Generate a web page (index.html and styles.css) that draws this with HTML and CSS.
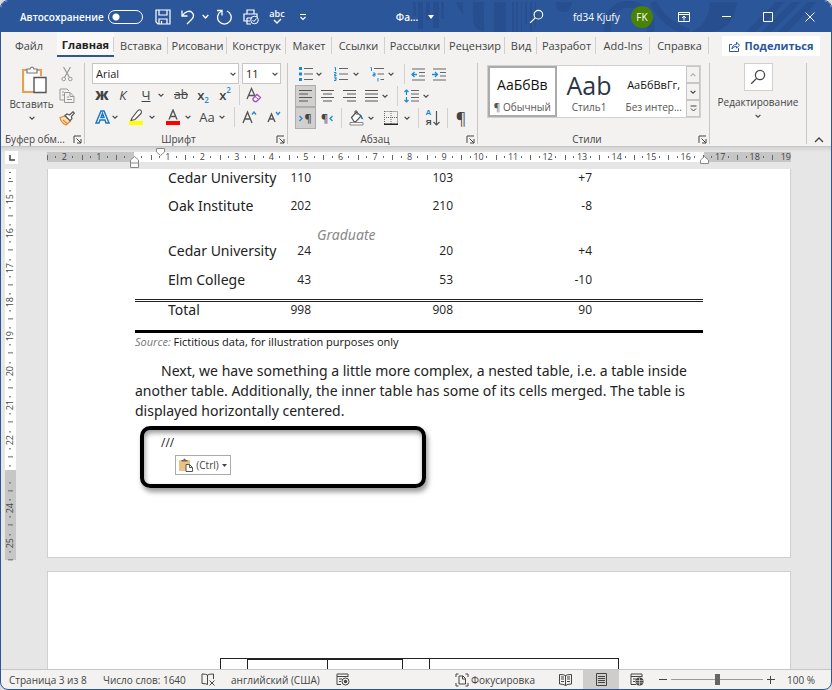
FILE: index.html
```html
<!DOCTYPE html>
<html lang="ru">
<head>
<meta charset="utf-8">
<title>Word</title>
<link rel="stylesheet" href="styles.css">
</head>
<body>
<svg class="sprite" aria-hidden="true">
  <symbol id="chev" viewBox="0 0 6 6"><path d="M.6 1.8 3 4.2 5.4 1.8" fill="none" stroke="currentColor" stroke-width="1.2"/></symbol>
  <symbol id="launch" viewBox="0 0 9 9"><path d="M1 8V1h7M3.5 3.5 8 8M8 4v4H4" fill="none" stroke="currentColor"/></symbol>
  <symbol id="lens" viewBox="0 0 16 16"><circle cx="10" cy="6" r="4.6" fill="none" stroke="currentColor" stroke-width="1.2"/><path d="M6.6 9.4 1.2 14.8" stroke="currentColor" stroke-width="1.3"/></symbol>
</svg>
<div class="window">
  <header class="titlebar">
    <svg class="pattern" viewBox="0 0 422 31" preserveAspectRatio="xMaxYMin slice" aria-hidden="true">
      <g fill="#274e8f"><path d="M4 1h3v14H4zM9 1h5v27H9zM17 1h4v18h-4zM24 1h6v26h-6zM32 1h3v17h-3zM47 1h7v12q-5-4-7-12zM64 1h11v30q-11-3-11-12zM85 1h12v30H85zM103 1h2v30h-2zM107 1h2v30h-2zM112 1h1v30h-1zM116 1h2v22h-2zM121 1h2v30h-2zM126 1h1v25h-1z"/><path d="M147 1h16q-1 10-9 10t-7-10zM301 1h27q-3 26-25 30h-21q18-8 19-30zM337 31 367 1h9l-30 30zM353 31 383 1h9l-30 30zM369 31 399 1h9l-30 30z"/></g>
      <g fill="none" stroke="#274e8f" stroke-width="7"><circle cx="220" cy="25" r="22"/><path d="M244 1q10 22 36 30"/></g>
    </svg>
    <label class="autosave">Автосохранение <input type="checkbox" role="switch"></label>
    <div class="quick">
      <button aria-label="Сохранить"><svg width="16" height="16" viewBox="0 0 16 16"><path d="M1 1h14v14H3l-2-2zM4 1v5h8V1M4 15v-5h8v5M6.500 12v3" fill="none" stroke="currentColor" stroke-width="1.200"/></svg></button>
      <button aria-label="Отменить"><svg width="16" height="16" viewBox="0 0 16 16"><path d="M2 1.500v5.500h5.500M2 7C5 2.500 9.500 1 12 3.500s1.500 5-.5 7L7 15" fill="none" stroke="currentColor" stroke-width="1.300"/></svg></button>
      <button aria-label="Варианты отмены"><svg width="7" height="7"><use href="#chev"/></svg></button>
      <button aria-label="Повторить"><svg width="16" height="16" viewBox="0 0 16 16"><path d="M1 1.500h5v5M5.800 2A6.800 6.800 0 1 0 11 2" fill="none" stroke="currentColor" stroke-width="1.300"/></svg></button>
      <button aria-label="Печать"><svg width="16" height="16" viewBox="0 0 16 16"><path d="M4 5V1h7v4M7 12H1V5h13v3M4 9h5M4 9v6h4" fill="none" stroke="currentColor" stroke-width="1.200"/><circle cx="11.500" cy="11" r="3.800" fill="none" stroke="currentColor"/><path d="m9.500 11 1.500 1.500 2.500-3" fill="none" stroke="currentColor"/></svg></button>
      <button class="spell" aria-label="Правописание">abc<svg width="9" height="6" viewBox="0 0 9 6"><path d="m1 2 3 3 4-4" fill="none" stroke="currentColor" stroke-width="1.300"/></svg></button>
      <button aria-label="Настройка панели"><svg width="8" height="8" viewBox="0 0 8 8"><path d="M1 1.500h6M1.500 4 4 6.500 6.500 4" fill="none" stroke="currentColor" stroke-width="1.200"/></svg></button>
    </div>
    <button class="doc-name">Фа... <svg width="6" height="4" viewBox="0 0 6 4"><path d="M0 0h6L3 4z" fill="currentColor"/></svg></button>
    <button class="search" aria-label="Поиск"><svg width="15" height="15"><use href="#lens"/></svg></button>
    <span class="user">fd34 Kjufy</span>
    <span class="avatar">FK</span>
    <div class="winbtns">
      <button aria-label="Параметры отображения ленты"><svg width="12" height="10" viewBox="0 0 12 10"><path d="M.5.500h11v9H.500zM.500 2.500h11M6 8.500v-4M4 6l2-2 2 2" fill="none" stroke="currentColor"/></svg></button>
      <button aria-label="Свернуть"><svg width="9" height="10" viewBox="0 0 9 10"><path d="M0 4.500h9" stroke="currentColor"/></svg></button>
      <button aria-label="Развернуть"><svg width="10" height="10" viewBox="0 0 10 10"><path d="M.5.500h9v9h-9z" fill="none" stroke="currentColor"/></svg></button>
      <button aria-label="Закрыть"><svg width="10" height="10" viewBox="0 0 10 10"><path d="m.5.500 9 9m0-9-9 9" stroke="currentColor"/></svg></button>
    </div>
  </header>

  <div class="tabbar">
    <nav class="tabs">
      <button class="plain">Файл</button><button class="active">Главная</button><button>Вставка</button><button>Рисовани</button><button>Конструк</button><button>Макет</button><button>Ссылки</button><button>Рассылки</button><button>Рецензир</button><button>Вид</button><button>Разработ</button><button>Add-Ins</button><button>Справка</button>
    </nav>
    <button class="share"><svg width="11" height="11" viewBox="0 0 11 11"><path d="M3 3.500H.500v7h9V7M3 8c0-3 2-4.500 4.500-4.500V1.200l3 3-3 3V5.500C5.500 5.500 4 6 3 8z" fill="none" stroke="currentColor"/></svg>Поделиться</button>
  </div>

  <div class="ribbon">
    <section class="group clipboard">
      <div class="clip-body">
        <button class="paste"><svg width="27" height="28" viewBox="0 0 27 28"><path d="M7 4H2v22h11M15 4h5v6" fill="none" stroke="#e8a04d" stroke-width="2"/><path d="M4 5h15v6h-6v14H4z" fill="#fafafa"/><path d="M6 7V3h3q2-4 4 0h3v4z" fill="#fff" stroke="#777" stroke-width="1.200"/><path d="M13 11.500h12v15H13z" fill="#fff" stroke="#555" stroke-width="1.400"/></svg><span>Вставить</span><svg width="6" height="6"><use href="#chev"/></svg></button>
        <div class="clip-side">
          <button aria-label="Вырезать"><svg width="12" height="15" viewBox="0 0 12 15"><path d="M2.500 0 8.500 10.500M9.500 0 3.500 10.500" stroke="#999" stroke-width="1.200"/><circle cx="2.700" cy="12" r="1.800" fill="none" stroke="#999"/><circle cx="9.300" cy="12" r="1.800" fill="none" stroke="#999"/></svg></button>
          <button aria-label="Копировать"><svg width="16" height="16" viewBox="0 0 16 16"><path d="M5 12H1V1h7l2 2M5.500 4.500H11l4 4v6H5.500zM11 4.500v4h4M3 4h2M3 7h2M8 9h2M8 11.500h5" fill="none" stroke="#999"/></svg></button>
          <button aria-label="Формат по образцу"><svg width="16" height="15" viewBox="0 0 16 15"><path d="m1 6.500 5-1.500 5.500 5L7 14Q2 12 1 6.500z" fill="#fbe0bb" stroke="#e8882a" stroke-width="1.300"/><path d="m4 9 4 3.500" stroke="#e8882a" stroke-width="1.300"/><path d="m6 4.500 2-1.500 2.500 1L14 .800l1.300 1.400-3 3.500.700 2-2 2z" fill="#fff" stroke="#555" stroke-width="1.200"/></svg></button>
        </div>
      </div>
      <footer>Буфер обм...<button aria-label="Буфер обмена: параметры"><svg width="9" height="9"><use href="#launch"/></svg></button></footer>
    </section>

    <section class="group font">
      <div class="combos">
        <div class="combo wide"><select aria-label="Шрифт"><option>Arial</option></select><svg width="6" height="6"><use href="#chev"/></svg></div>
        <div class="combo"><select aria-label="Размер шрифта"><option>11</option></select><svg width="6" height="6"><use href="#chev"/></svg></div>
      </div>
      <div class="row font-a">
        <button class="glyph bold">Ж</button><button class="glyph italic">К</button><button class="glyph under">Ч</button><button class="dd" aria-label="Подчёркивание"><svg width="6" height="6"><use href="#chev"/></svg></button>
        <button class="glyph strike">ab</button><button class="glyph script">x<sub>2</sub></button><button class="glyph script">x<sup>2</sup></button><i class="sep"></i>
        <button aria-label="Очистить формат"><svg width="16" height="16" viewBox="0 0 16 16"><path d="M1 12 5.500 1.500 9 9M2.500 8.500H8" fill="none" stroke="#555" stroke-width="1.300"/><path d="m7 11.500 4-4 3.500 3-4 4H8.500L7 13z" fill="#fff" stroke="#a44cc0" stroke-width="1.300"/><path d="m9 9.500 3.500 3" stroke="#a44cc0"/></svg></button>
      </div>
      <div class="row font-b">
        <button aria-label="Текстовые эффекты"><svg width="15" height="16" viewBox="0 0 15 16"><path d="M1 14 6 2h3l5 12h-3l-1-3H5l-1 3zM6 8.500h3L7.500 4.500z" fill="#fff" stroke="#1a78c2" stroke-width="1.500"/></svg></button><button class="dd" aria-label="Варианты эффектов"><svg width="6" height="6"><use href="#chev"/></svg></button>
        <button aria-label="Цвет выделения"><svg width="16" height="16" viewBox="0 0 16 16"><path d="m4 9 6-7.500q2-1.500 3 0t0 3L7 10.500l-4 1z" fill="#fff" stroke="#555" stroke-width="1.200"/><path d="M1 12h14v4H1z" fill="#ff0"/></svg></button><button class="dd" aria-label="Варианты выделения"><svg width="6" height="6"><use href="#chev"/></svg></button>
        <button aria-label="Цвет текста"><svg width="16" height="16" viewBox="0 0 16 16"><path d="M4 10.500 8 1l4 9.500M5.500 7.500h5" fill="none" stroke="#555" stroke-width="1.400"/><path d="M1 12h14v4H1z" fill="red"/></svg></button><button class="dd" aria-label="Варианты цвета"><svg width="6" height="6"><use href="#chev"/></svg></button>
        <button class="glyph">Aa</button><button class="dd" aria-label="Варианты регистра"><svg width="6" height="6"><use href="#chev"/></svg></button><i class="sep"></i>
        <button aria-label="Увеличить размер"><svg width="15" height="14" viewBox="0 0 15 14"><path d="M1 13 5.500 2 10 13M2.500 9h6" fill="none" stroke="#555" stroke-width="1.400"/><path d="m10 4.500 2-2.500 2 2.500" fill="none" stroke="#1a8ad4" stroke-width="1.300"/></svg></button>
        <button aria-label="Уменьшить размер"><svg width="15" height="14" viewBox="0 0 15 14"><path d="m2 12 3.500-8L9 12M3 9h5" fill="none" stroke="#555" stroke-width="1.400"/><path d="m10 2 2 2.500L14 2" fill="none" stroke="#1a8ad4" stroke-width="1.300"/></svg></button>
      </div>
      <footer>Шрифт<button aria-label="Шрифт: параметры"><svg width="9" height="9"><use href="#launch"/></svg></button></footer>
    </section>

    <section class="group para">
      <div class="row para-a">
        <button aria-label="Маркеры"><svg width="14" height="14" viewBox="0 0 14 14"><path d="M0 0h3v3H0zM0 5.500h3v3H0zM0 11h3v3H0z" fill="#1a8ad4"/><path d="M5 1.500h9M5 7h9M5 12.500h9" stroke="#666"/></svg></button><button class="dd" aria-label="Варианты маркеров"><svg width="6" height="6"><use href="#chev"/></svg></button>
        <button aria-label="Нумерация"><svg width="14" height="14" viewBox="0 0 14 14"><path d="M.5.500h1V4M0 5.500h2v1.700H.500v1.300H2.500M0 10h2v3.500H0M.500 11.800H2" fill="none" stroke="#1a8ad4"/><path d="M5 1.500h9M5 7h9M5 12.500h9" stroke="#666"/></svg></button><button class="dd" aria-label="Варианты нумерации"><svg width="6" height="6"><use href="#chev"/></svg></button>
        <button aria-label="Многоуровневый список"><svg width="14" height="15" viewBox="0 0 14 15"><path d="M.5.500h1V4M3 6h2v3H3V7.500h2M8 9.500v0M8 11v3.500" fill="none" stroke="#1a8ad4"/><path d="M4 1.500h10M7.500 7H14M10.500 12.500H14" stroke="#666"/></svg></button><button class="dd" aria-label="Варианты списка"><svg width="6" height="6"><use href="#chev"/></svg></button><i class="sep"></i>
        <button aria-label="Уменьшить отступ"><svg width="14" height="13" viewBox="0 0 14 13"><path d="M1 1h13M8 4.500h6M8 8h6M1 12h13" stroke="#666"/><path d="M6 6.500H1M3.500 4 1 6.500 3.500 9" fill="none" stroke="#1a8ad4" stroke-width="1.300"/></svg></button>
        <button aria-label="Увеличить отступ"><svg width="14" height="13" viewBox="0 0 14 13"><path d="M1 1h13M8 4.500h6M8 8h6M1 12h13" stroke="#666"/><path d="M0 6.500h5.500M3 4l2.500 2.500L3 9" fill="none" stroke="#1a8ad4" stroke-width="1.300"/></svg></button>
      </div>
      <div class="row para-b">
        <button class="on" aria-label="По левому краю"><svg width="13" height="14" viewBox="0 0 13 14"><path d="M0 1.500h13M0 5h9M0 8.500h13M0 12h9" stroke="#555"/></svg></button>
        <button aria-label="По центру"><svg width="13" height="14" viewBox="0 0 13 14"><path d="M0 1.500h13M2 5h9M0 8.500h13M2 12h9" stroke="#555"/></svg></button>
        <button aria-label="По правому краю"><svg width="13" height="14" viewBox="0 0 13 14"><path d="M0 1.500h13M4 5h9M0 8.500h13M4 12h9" stroke="#555"/></svg></button>
        <button aria-label="По ширине"><svg width="13" height="14" viewBox="0 0 13 14"><path d="M0 1.500h13M0 5h13M0 8.500h13M0 12h13" stroke="#555"/></svg></button><button class="dd" aria-label="Варианты выравнивания"><svg width="6" height="6"><use href="#chev"/></svg></button><i class="sep"></i>
        <button aria-label="Интервал"><svg width="15" height="14" viewBox="0 0 15 14"><path d="M7 1.500h8M7 5h8M7 8.500h8M7 12h8" stroke="#666"/><path d="M2.500 1v5M.500 3l2-2 2 2M2.500 8v5M.500 11l2 2 2-2" fill="none" stroke="#1a8ad4" stroke-width="1.200"/></svg></button><button class="dd" aria-label="Варианты интервала"><svg width="6" height="6"><use href="#chev"/></svg></button>
      </div>
      <div class="row para-c">
        <button class="on dir" aria-label="Слева направо"><svg width="4" height="7" viewBox="0 0 4 7"><path d="m.5 1 2.500 2.500L.5 6" fill="none" stroke="#1a8ad4" stroke-width="1.300"/></svg>¶</button><button class="dir" aria-label="Справа налево">¶<svg width="4" height="7" viewBox="0 0 4 7"><path d="M3.500 1 1 3.500 3.500 6" fill="none" stroke="#1a8ad4" stroke-width="1.300"/></svg></button><i class="sep"></i>
        <button aria-label="Заливка"><svg width="15" height="16" viewBox="0 0 15 16"><path d="m2.500 7.500 5-5.500 4.500 4-5 5.500H5z" fill="#fff" stroke="#555" stroke-width="1.200"/><path d="M6 4V1h2v4" fill="none" stroke="#555"/><path d="m11.500 3.500 3 6-2.500-1z" fill="#1a78c2"/><path d="M1 12.500h13v2.500H1z" fill="#fff" stroke="#888"/></svg></button><button class="dd" aria-label="Варианты заливки"><svg width="6" height="6"><use href="#chev"/></svg></button>
        <button aria-label="Границы"><svg width="14" height="14" viewBox="0 0 14 14"><path d="M.5.500h13V13M.500 0v13M7 0v13M0 6.500h14" fill="none" stroke="#666" stroke-dasharray="1 1"/><path d="M0 13.200h14" stroke="#222" stroke-width="1.500"/></svg></button><button class="dd" aria-label="Варианты границ"><svg width="6" height="6"><use href="#chev"/></svg></button><i class="sep"></i>
        <button class="sort" aria-label="Сортировка"><span><b>А</b><b>Я</b></span><svg width="7" height="15" viewBox="0 0 7 15"><path d="M3.500 0v14M.500 11l3 3 3-3" fill="none" stroke="#555" stroke-width="1.200"/></svg></button><i class="sep"></i>
        <button class="pilcrow" aria-label="Знаки форматирования">¶</button>
      </div>
      <footer>Абзац<button aria-label="Абзац: параметры"><svg width="9" height="9"><use href="#launch"/></svg></button></footer>
    </section>

    <section class="group styles">
      <div class="gallery">
        <button class="style picked"><span class="sample">АаБбВв</span><span>¶ Обычный</span></button>
        <button class="style"><span class="sample big">Ааb</span><span>Стиль1</span></button>
        <button class="style"><span class="sample tiny">АаБбВвГг,</span><span>Без интер...</span></button>
        <div class="scroller">
          <button class="off" aria-label="Вверх"><svg class="flip" width="6" height="6"><use href="#chev"/></svg></button>
          <button aria-label="Вниз"><svg width="6" height="6"><use href="#chev"/></svg></button>
          <button aria-label="Все стили"><svg width="7" height="7" viewBox="0 0 7 7"><path d="M.500 1h6M1 3.500l2.500 2.500L6 3.500" fill="none" stroke="currentColor"/></svg></button>
        </div>
      </div>
      <footer>Стили<button aria-label="Стили: параметры"><svg width="9" height="9"><use href="#launch"/></svg></button></footer>
    </section>

    <section class="group editing">
      <button class="find"><span class="tile"><svg width="16" height="16"><use href="#lens"/></svg></span><span>Редактирование</span><svg width="6" height="6"><use href="#chev"/></svg></button>
    </section>
    <button class="collapse" aria-label="Свернуть ленту"><svg width="10" height="6" viewBox="0 0 10 6"><path d="m1 5 4-4 4 4" fill="none" stroke="currentColor" stroke-width="1.300"/></svg></button>
  </div>

  <main class="workspace">
    <div class="hbar">
      <div class="corner"><button aria-label="Табуляция"><svg width="6" height="6" viewBox="0 0 6 6"><path d="M1 0v5h5" fill="none" stroke="#444" stroke-width="1.500"/></svg></button></div>
      <div class="hruler">
        <span>2</span><span>1</span><span></span><span>1</span><span>2</span><span>3</span><span>4</span><span>5</span><span>6</span><span>7</span><span>8</span><span>9</span><span>10</span><span>11</span><span>12</span><span>13</span><span>14</span><span>15</span><span>16</span><span>17</span><span>18</span><span class="end">19</span>
        <svg class="mark first" width="9" height="8" viewBox="0 0 9 8"><path d="M.500.500h8V4l-4 3.500-4-3.500z" fill="#fff" stroke="#888"/></svg>
        <svg class="mark left" width="9" height="12" viewBox="0 0 9 12"><path d="M.500 11.500V4l4-3.500 4 3.500v7.500zM.500 7h8" fill="#fff" stroke="#888"/></svg>
        <svg class="mark right" width="9" height="8" viewBox="0 0 9 8"><path d="M.500 7.500V4l4-3.500 4 3.500v3.500z" fill="#fff" stroke="#888"/></svg>
      </div>
    </div>
    <div class="canvas">
      <div class="vruler">
        <span class="part"></span><span>15</span><span>16</span><span>17</span><span>18</span><span>19</span><span>20</span><span>21</span><span>22</span><span></span><span>24</span><span>25</span>
      </div>
      <div class="pages">
        <article class="page one">
          <table class="data">
            <colgroup><col class="c1"><col class="c2"><col class="c3"><col class="c4"></colgroup>
            <tbody>
              <tr class="lead"><th>Cedar University</th><td>110</td><td>103</td><td>+7</td></tr>
              <tr><th>Oak Institute</th><td>202</td><td>210</td><td>-8</td></tr>
              <tr class="level"><th colspan="4">Graduate</th></tr>
              <tr class="lead"><th>Cedar University</th><td>24</td><td>20</td><td>+4</td></tr>
              <tr class="last"><th>Elm College</th><td>43</td><td>53</td><td>-10</td></tr>
            </tbody>
            <tfoot><tr class="lead"><th>Total</th><td>998</td><td>908</td><td>90</td></tr></tfoot>
          </table>
          <p class="source"><em>Source:</em> Fictitious data, for illustration purposes only</p>
          <p class="body">Next, we have something a little more complex, a nested table, i.e. a table inside another table. Additionally, the inner table has some of its cells merged. The table is displayed horizontally centered.</p>
          <div class="callout">
            <p>///</p>
            <button class="paste-tag"><svg width="14" height="14" viewBox="0 0 14 14"><path d="M0 2h11v4H7v7H0z" fill="#eac282"/><path d="M2.500 3.500V2H4q1.500-3 3 0h1.500v1.500z" fill="#666"/><path d="M7 6.500h3.500l3 3v4H7zM10.500 6.500v3h3" fill="#fff" stroke="#555"/></svg>(Ctrl)<svg width="5" height="3" viewBox="0 0 5 3"><path d="M0 0h5L2.500 3z" fill="currentColor"/></svg></button>
          </div>
        </article>
        <article class="page two">
          <table class="outer"><tbody><tr>
            <td><table class="inner"><tbody><tr><td></td><td></td></tr></tbody></table></td><td></td>
          </tr></tbody></table>
        </article>
      </div>
    </div>
  </main>

  <footer class="status">
    <span class="pg">Страница 3 из 8</span>
    <span class="words">Число слов: 1640</span>
    <button class="proof" aria-label="Проверка"><svg width="14" height="13" viewBox="0 0 14 13"><path d="M6.500 2v9.500M6.500 2Q5 1 1 1v9.500q4 0 5.500 1M6.500 2Q8 1 12.500 1v5M8.500 7.500l5 5m0-5-5 5" fill="none" stroke="currentColor"/></svg></button>
    <span class="lang">английский (США)</span>
    <button class="macro" aria-label="Запись макроса"><svg width="14" height="13" viewBox="0 0 14 13"><path d="M5 11.500H1V1h11v3M1 3.500h11M3 6h3M3 8.500h2" fill="none" stroke="currentColor"/><circle cx="9.500" cy="8.500" r="3.500" fill="none" stroke="currentColor"/><circle cx="9.500" cy="8.500" r="1.700" fill="currentColor"/></svg></button>
    <button class="focus"><svg width="14" height="14" viewBox="0 0 14 14"><path d="M3.500 1H1v3M10.500 1H13v3M3.500 13H1v-3M10.500 13H13v-3M4 3h4l2.500 2.500V11H4zM7.500 3v3h3" fill="none" stroke="currentColor"/></svg>Фокусировка</button>
    <div class="views">
      <button aria-label="Чтение"><svg width="13" height="12" viewBox="0 0 13 12"><path d="M6.500 1.500v10M6.500 1.500Q5 .500.500.500v9.500q4 0 6 1.500 2-1.500 6-1.500V.500Q8 .500 6.500 1.500M2 3h3M2 5h3M2 7.500h3M8 3h3M8 5h3M8 7.500h3" fill="none" stroke="currentColor"/></svg></button>
      <button class="on" aria-label="Разметка страницы"><svg width="11" height="13" viewBox="0 0 11 13"><path d="M.500.500h10v12H.500zM2 3.500h7M2 5.500h7M2 7.500h7M2 9.500h7" fill="none" stroke="currentColor"/></svg></button>
      <button aria-label="Веб-документ"><svg width="14" height="13" viewBox="0 0 14 13"><path d="M6 11.500H1V1h11v3M1 3.500h11M3 6h3M3 8.500h2" fill="none" stroke="currentColor"/><circle cx="9.500" cy="8.500" r="4" fill="currentColor"/><path d="M6 7.500h7M6 9.800h7M9.500 5v7" stroke="#f3f2f1" stroke-width=".6"/></svg></button>
    </div>
    <div class="zoom">
      <button aria-label="Уменьшить"><svg width="8" height="8" viewBox="0 0 8 8"><path d="M0 3.500h8" stroke="currentColor"/></svg></button>
      <input type="range" min="0" max="100" value="50" aria-label="Масштаб">
      <button aria-label="Увеличить"><svg width="8" height="8" viewBox="0 0 8 8"><path d="M0 3.500h8M3.500 0v8" stroke="currentColor"/></svg></button>
    </div>
    <span class="pct">100 %</span>
  </footer>
</div>
</body>
</html>
```

FILE: styles.css
```css
* { box-sizing: border-box; }
body { margin: 0; background: #dcdcdc; color: #444; font: 10px/16px "Open Sans", "Noto Sans", sans-serif; }
button, select, input { font: inherit; color: inherit; margin: 0; }
button { display: flex; align-items: center; justify-content: center; padding: 0; border: 0; background: none; white-space: nowrap; }
svg { display: block; flex: none; }
p { margin: 0; }
.sprite { position: absolute; width: 0; height: 0; }

.window { display: flex; flex-direction: column; height: 100vh; border: 1px solid #2b579a; border-radius: 8px; overflow: hidden; background: #f3f2f1; }

/* Title bar */
.titlebar { position: relative; display: flex; align-items: center; flex: none; height: 31px; padding-left: 19px; background: #2b579a; color: #fff; }
.titlebar > * { position: relative; }
.titlebar .pattern { position: absolute; right: 0; top: 0; width: 422px; height: 31px; }
.autosave { display: flex; align-items: center; justify-content: space-between; width: 123px; font-weight: 600; white-space: nowrap; }
.autosave input { appearance: none; flex: none; width: 35px; height: 14px; border: 1px solid #fff; border-radius: 7px; background: radial-gradient(circle at 7px 6px, #fff 3px, transparent 4px); }
.quick { display: grid; grid-template-columns: 26px 24px 10px 28px 26px 26px 26px; margin-left: 7px; }
.quick .spell { flex-direction: column; font-size: 9px; line-height: 8px; font-weight: 600; }
.doc-name { flex: 1; gap: 10px; padding-right: 12px; font-weight: 600; }
.search { width: 20px; margin-right: 27px; }
.user { width: 50px; }
.avatar { width: 22px; height: 22px; margin: 0 10px 0 8px; border-radius: 50%; background: #498205; line-height: 22px; text-align: center; }
.winbtns { display: grid; grid-template-columns: repeat(4, 42px); height: 100%; }

/* Tabs */
.tabbar { display: flex; align-items: center; flex: none; height: 28px; font-size: 11px; }
.tabs { flex: 1; display: grid; grid-template-columns: 56fr 57fr 54fr 59fr 59fr 46fr 53fr 60fr 60fr 32fr 59fr 54fr 59fr; height: 28px; padding-bottom: 3px; }
.tabs button { position: relative; min-width: 0; padding-top: 3px; }
.tabs button::after { content: ""; position: absolute; right: 0; top: 5px; bottom: 3px; width: 1px; background: #d2d0ce; }
.tabs .plain::after { display: none; }
.tabs .active { background: #faf9f8; border-bottom: 2px solid #2b579a; color: #222; font-weight: 700; }
.share { width: 98px; height: 20px; margin: 0 11px 0 13px; gap: 5px; background: #fff; color: #2b579a; font-weight: 700; }

/* Ribbon */
.ribbon { display: flex; flex: none; height: 87px; padding-top: 3px; border-bottom: 1px solid #c8c6c4; }
.group { position: relative; display: flex; flex-direction: column; height: 81px; border-right: 1px solid #c8c6c4; }
.group > footer { display: flex; align-items: center; justify-content: center; margin-top: auto; height: 11px; padding-right: 22px; white-space: nowrap; }
.group > footer button { position: absolute; right: 2px; bottom: 0; width: 10px; height: 10px; }
.clipboard { width: 84px; }
.clipboard > footer { padding: 0 0 0 4px; justify-content: flex-start; }
.clip-body { display: grid; grid-template-columns: 53px 1fr; padding-left: 4px; }
.paste { flex-direction: column; justify-content: flex-start; padding-top: 3px; }
.paste svg:first-child { margin-left: 5px; }
.paste span { margin: 2px 0 3px; }
.clip-side { display: grid; grid-template-rows: repeat(3, 22px); padding-right: 8px; }
.font { width: 203px; padding-left: 7px; }
.combos { display: flex; gap: 3px; height: 21px; }
.combo { position: relative; width: 39px; }
.combo.wide { width: 147px; }
.combo select { appearance: none; width: 100%; height: 21px; padding: 0 3px; border: 1px solid #c8c6c4; border-radius: 0; background: #fff; font-size: 11px; line-height: 18px; color: #222; }
.combo svg { position: absolute; right: 3px; top: 8px; }
.row { display: grid; height: 22px; }
.row .dd { justify-content: flex-start; }
.sep { width: 1px; height: 20px; margin: 1px auto; background: #d2d0ce; }
.font-a { grid-template-columns: 20px 22px 24px 12px 22px 22px 22px 6px 24px; }
.font-b { grid-template-columns: 20px 10px 27px 12px 24px 10px 24px 12px 6px 24px 24px; }
.glyph { font-size: 13px; }
.bold { font-weight: 800; }
.italic { font-style: italic; }
.under { text-decoration: underline; }
.strike { font-size: 12px; text-decoration: line-through; }
.script { font-weight: 600; }
.script sub, .script sup { font-size: 8px; line-height: 8px; color: #1a8ad4; }
.script sub { align-self: flex-end; margin-bottom: 2px; }
.script sup { align-self: flex-start; margin-top: 2px; }
.para { width: 190px; padding-left: 7px; }
.para-a { grid-template-columns: 21px 13px 24px 12px 23px 12px 8px 20px 22px; }
.para-b { grid-template-columns: 21px 22px 22px 22px 12px 6px 23px 12px; }
.para-c { grid-template-columns: 21px 22px 6px 24px 10px 26px 10px 8px 22px 6px 22px; }
.row .on { border: 1px solid #b0aeac; background: #d2d0ce; }
.dir { gap: 1px; font-size: 11px; font-weight: 600; }
.sort { gap: 2px; font: 8px/10px "Liberation Sans", sans-serif; }
.sort b { display: block; }
.sort b:first-child { color: #1a8ad4; }
.pilcrow { font-size: 16px; }

.styles { width: 232px; padding: 2px 8px 0 9px; }
.styles > footer { padding-right: 14px; }
.gallery { display: flex; height: 53px; border: 1px solid #d2d0ce; background: #fff; }
.style { flex: 1; min-width: 0; flex-direction: column; justify-content: flex-end; padding-bottom: 2px; color: #555; }
.style.picked { border: 2px solid #ababab; padding: 0; }
.sample { height: 28px; line-height: 28px; font-size: 14px; color: #111; }
.sample.big { font-size: 25px; color: #2b3547; }
.sample.tiny { font-size: 11px; }
.scroller { display: grid; grid-template-rows: repeat(3, 1fr); width: 14px; background: #f3f2f1; }
.scroller button { border: 1px solid #c8c6c4; }
.scroller .off { color: #b0aeac; }
.flip { transform: rotate(180deg); }
.editing { width: 97px; }
.find { flex-direction: column; }
.find .tile { display: grid; place-items: center; width: 29px; height: 28px; margin-bottom: 3px; border: 1px solid #d2d0ce; background: #fff; }
.find > svg { margin-top: 3px; }
.collapse { flex: 1; align-items: flex-end; padding-bottom: 3px; }

/* Rulers and pages */
.workspace { flex: 1; min-height: 0; display: flex; flex-direction: column; background: #e6e6e6; }
.hbar { display: flex; flex: none; height: 22px; padding-right: 40px; background: linear-gradient(#d2d2d2, #e6e6e6 5px); }
.corner { width: 46px; padding: 4px 0 0 4px; }
.corner button { width: 13px; height: 13px; background: #fff; }
.hruler { position: relative; flex: 1; display: grid; grid-template-columns: repeat(21, 100fr) 55fr; height: 10px; margin-top: 5px; background: linear-gradient(90deg, #c6c6c6 11.7%, #fff 11.7%, #fff 88.3%, #c6c6c6 88.3%); }
.hruler span { min-width: 0; font-size: 9px; line-height: 10px; text-align: center; background: linear-gradient(#666, #666) 0 50% / 1px 5px no-repeat, linear-gradient(#666, #666) 25% 50% / 1px 2px no-repeat, linear-gradient(#666, #666) 75% 50% / 1px 2px no-repeat; }
.hruler .end { text-align: right; background: linear-gradient(#666, #666) 0 50% / 1px 5px no-repeat; }
.mark { position: absolute; margin-left: -4px; }
.mark.first { left: 15.2%; top: -4px; }
.mark.left { left: 11.7%; top: 4px; }
.mark.right { left: 88.3%; top: 4px; }
.canvas { flex: 1; min-height: 0; display: flex; padding-right: 40px; overflow: hidden; }
.vruler { display: grid; grid-template-rows: 38fr repeat(11, 100fr); width: 11px; height: 391px; margin: 0 31px 0 4px; background: linear-gradient(#fff 77%, #c6c6c6 77%); }
.vruler span { writing-mode: vertical-rl; transform: rotate(180deg); min-height: 0; font-size: 9px; line-height: 10px; text-align: center; background: linear-gradient(#666, #666) 50% 0 / 5px 1px no-repeat, linear-gradient(#666, #666) 50% 25% / 2px 1px no-repeat, linear-gradient(#666, #666) 50% 75% / 2px 1px no-repeat; }
.pages { flex: 1; min-width: 0; }
.page { border: 1px solid #cfcfcf; background: #fff; color: #222; padding: 0 87px; }
.one { height: 389px; border-top: 0; padding-top: 1px; }
.two { height: 200px; margin-top: 13px; padding-top: 86px; }
.data { width: 100%; table-layout: fixed; border-spacing: 0; border-bottom: 3px solid #000; }
.c1 { width: 26%; }
.c2 { width: 5%; }
.c3 { width: 25%; }
.data th, .data td { height: 28px; padding: 0; vertical-align: middle; font-size: 12px; line-height: 16px; text-align: right; white-space: nowrap; }
.data td:last-child { padding-right: 111px; }
.data th { padding-left: 33px; font: 400 14px/16px "Noto Sans", "Open Sans", sans-serif; text-align: left; }
.data .lead > * { height: 22px; vertical-align: top; }
.data .level th { height: 23px; padding-left: 182px; vertical-align: bottom; color: #888; font-style: italic; }
.data .last > * { height: 34px; padding-bottom: 5px; }
.data tfoot .lead > * { height: 31px; border-top: 3px double #222; }
.source { font-size: 11px; line-height: 18px; color: #111; }
.source em { color: #777; }
.body { margin-top: 10px; font: 14px/20px "Noto Sans", "Open Sans", sans-serif; text-indent: 26px; }
.callout { width: 286px; height: 62px; margin: 5px 0 0 5px; padding: 5px 17px; border: 4px solid #000; border-radius: 10px; box-shadow: 2px 4px 5px #0006, inset 1px 3px 5px #0006; font-size: 12px; }
.paste-tag { width: 56px; height: 20px; margin: 4px 0 0 14px; gap: 3px; border: 1px solid #ababab; background: #fff; color: #444; font-size: 10px; }
.outer { width: 399px; margin: 0 auto; border-collapse: collapse; }
.outer > tbody > tr > td { height: 60px; padding: 0; vertical-align: top; border: 1px solid #222; }
.outer > tbody > tr > td:first-child { width: 209px; }
.inner { width: 156px; margin: 0 auto; border-collapse: collapse; }
.inner td { height: 50px; border: 1px solid #222; }
.inner td:first-child { width: 80px; }

/* Status bar */
.status { display: flex; align-items: center; flex: none; height: 20px; padding-left: 8px; border-top: 1px solid #c8c6c4; white-space: nowrap; }
.status > * { flex: none; }
.pg { width: 94px; }
.words { width: 98px; }
.proof { width: 14px; margin-right: 16px; }
.lang { width: 105px; }
.focus { gap: 2px; margin-left: auto; margin-right: 12px; }
.views { display: grid; grid-template-columns: repeat(3, 36px); height: 19px; }
.views .on { background: #cfcdcb; }
.zoom { display: flex; align-items: center; gap: 4px; margin-left: 4px; }
.zoom input { appearance: none; width: 92px; height: 12px; background: linear-gradient(#999, #999) 0 50% / 100% 1px no-repeat; }
.zoom input::-webkit-slider-thumb { appearance: none; width: 5px; height: 11px; background: #666; }
.pct { width: 56px; padding-left: 12px; }
```
